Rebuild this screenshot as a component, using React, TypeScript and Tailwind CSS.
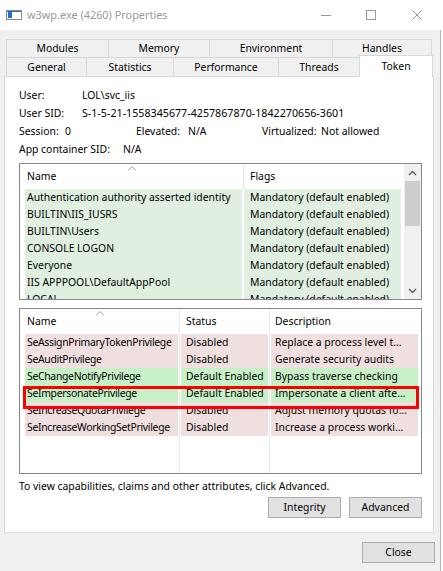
import type { ReactNode } from "react";

type Privilege = {
  name: string;
  status: string;
  desc: string;
  enabled: boolean;
};

const groups = [
  "Authentication authority asserted identity",
  "BUILTIN\\IIS_IUSRS",
  "BUILTIN\\Users",
  "CONSOLE LOGON",
  "Everyone",
  "IIS APPPOOL\\DefaultAppPool",
  "LOCAL",
];

const privileges: Privilege[] = [
  { name: "SeAssignPrimaryTokenPrivilege", status: "Disabled", desc: "Replace a process level t…", enabled: false },
  { name: "SeAuditPrivilege", status: "Disabled", desc: "Generate security audits", enabled: false },
  { name: "SeChangeNotifyPrivilege", status: "Default Enabled", desc: "Bypass traverse checking", enabled: true },
  { name: "SeImpersonatePrivilege", status: "Default Enabled", desc: "Impersonate a client afte…", enabled: true },
  { name: "SeIncreaseQuotaPrivilege", status: "Disabled", desc: "Adjust memory quotas fo…", enabled: false },
  { name: "SeIncreaseWorkingSetPrivilege", status: "Disabled", desc: "Increase a process worki…", enabled: false },
];

const SortCaret = () => (
  <svg width="9" height="5" viewBox="0 0 9 5" className="absolute top-[2px] left-1/2 -translate-x-1/2">
    <polyline points="0.5,4.5 4.5,0.5 8.5,4.5" fill="none" stroke="#9a9a9a" strokeWidth="1" />
  </svg>
);

const Chevron = ({ up }: { up: boolean }) => (
  <svg width="9" height="6" viewBox="0 0 9 6">
    <polyline
      points={up ? "1,5 4.5,1.5 8,5" : "1,1 4.5,4.5 8,1"}
      fill="none"
      stroke="#606060"
      strokeWidth="1.4"
    />
  </svg>
);

const Tab = ({ w, children, last }: { w: string; children: ReactNode; last?: boolean }) => (
  <div
    className={`${w} h-full flex items-center justify-center border-l border-t border-[#d9d9d9] bg-[#f0f0f0] ${
      last ? "border-r" : ""
    }`}
  >
    {children}
  </div>
);

const Button = ({ children, w = "w-[73px]" }: { children: ReactNode; w?: string }) => (
  <div className={`${w} h-[21px] flex items-center justify-center bg-[#e1e1e1] border border-[#adadad]`}>
    {children}
  </div>
);

export default function App() {
  return (
    <div className="w-[443px] h-[571px] bg-white flex font-['Noto_Sans',sans-serif] text-[10.4px] text-black leading-none overflow-hidden">
      <div className="w-[441px] h-full flex flex-col">
        {/* title bar */}
        <div className="h-[30px] bg-white flex items-center">
          <svg width="16" height="10" viewBox="0 0 16 10" className="ml-[6px]">
            <rect x="0.5" y="0.5" width="15" height="9" fill="#fff" stroke="#8a8a8a" />
            <rect x="2" y="2" width="4" height="6" fill="#1f6fd1" />
            <rect x="1" y="1" width="14" height="1" fill="#1f6fd1" />
          </svg>
          <span className="ml-[5px] text-[10.9px] text-[#999999]">w3wp.exe (4260) Properties</span>
          <div className="ml-auto flex items-center">
            <div className="w-[10px] h-px bg-[#9a9a9a] mr-[35px]" />
            <div className="w-[10px] h-[10px] border border-[#9a9a9a] mr-[36px]" />
            <svg width="10" height="10" viewBox="0 0 10 10" className="mr-[19px]">
              <path d="M0.5 0.5 L9.5 9.5 M9.5 0.5 L0.5 9.5" stroke="#9a9a9a" strokeWidth="1" />
            </svg>
          </div>
        </div>

        <div className="flex-1 bg-[#f0f0f0] border-r border-[#b4b4b4] flex flex-col">
          {/* tabs */}
          <div className="pt-[9px] pl-[6px]">
            <div className="flex h-[18px]">
              <Tab w="w-[102px]">Modules</Tab>
              <Tab w="w-[101px]">Memory</Tab>
              <Tab w="w-[123px]">Environment</Tab>
              <Tab w="w-[100px]" last>
                Handles
              </Tab>
            </div>
            <div className="flex h-[19px] items-start">
              <Tab w="w-[80px]">General</Tab>
              <Tab w="w-[87px]">Statistics</Tab>
              <Tab w="w-[105px]">Performance</Tab>
              <Tab w="w-[81px]">Threads</Tab>
              <div className="relative z-10 w-[74px] h-[22px] -mt-[2px] bg-white border-l border-t border-r border-[#d9d9d9] flex justify-center pt-[5px]">
                Token
              </div>
            </div>
          </div>

          {/* token page */}
          <div className="ml-[4px] w-[430px] h-[457px] bg-white border border-[#d9d9d9] flex flex-col">
            <div className="pt-[9px] pl-[14px] flex flex-col">
              <div className="h-[18px] flex items-center">
                <span className="w-[63px]">User:</span>
                <span>LOL\svc_iis</span>
              </div>
              <div className="h-[18px] flex items-center">
                <span className="w-[63px]">User SID:</span>
                <span className="text-[10.7px]">S-1-5-21-1558345677-4257867870-1842270656-3601</span>
              </div>
              <div className="h-[18px] flex items-center">
                <span className="w-[46px]">Session:</span>
                <span className="w-[71px]">0</span>
                <span className="w-[52px]">Elevated:</span>
                <span className="w-[74px]">N/A</span>
                <span className="w-[59px]">Virtualized:</span>
                <span>Not allowed</span>
              </div>
              <div className="h-[18px] flex items-center">
                <span className="w-[104px]">App container SID:</span>
                <span>N/A</span>
              </div>

              {/* groups */}
              <div className="mt-[5px] w-[403px] h-[137px] border border-[#828790] bg-white flex overflow-hidden">
                <div className="w-[384px] flex flex-col">
                  <div className="h-[25px] shrink-0 flex">
                    <div className="relative w-[223px] flex items-center pl-[7px]">
                      <SortCaret />
                      Name
                    </div>
                    <div className="w-px bg-[#e5e5e5]" />
                    <div className="flex items-center pl-[6px]">Flags</div>
                  </div>
                  {groups.map((g) => (
                    <div key={g} className="h-[17px] shrink-0 flex pl-[5px]">
                      <div className="w-[217px] bg-[#e0efe0] flex items-center pl-[2px] whitespace-nowrap overflow-hidden">
                        {g}
                      </div>
                      <div className="w-[157px] ml-[2px] bg-[#e0efe0] flex items-center pl-[6px] whitespace-nowrap overflow-hidden">
                        Mandatory (default enabled)
                      </div>
                    </div>
                  ))}
                </div>
                <div className="w-[17px] ml-auto bg-[#f0f0f0] flex flex-col">
                  <div className="h-[17px] flex items-center justify-center">
                    <Chevron up />
                  </div>
                  <div className="h-[45px] mx-px bg-[#cdcdcd]" />
                  <div className="flex-1" />
                  <div className="h-[17px] flex items-center justify-center">
                    <Chevron up={false} />
                  </div>
                </div>
              </div>

              {/* privileges */}
              <div className="relative mt-[8px] w-[403px] h-[166px] border border-[#828790] bg-white flex">
                <div className="w-[160px] border-r border-[#e5e8ec] flex flex-col">
                  <div className="relative h-[25px] flex items-center pl-[7px]">
                    <SortCaret />
                    Name
                  </div>
                  {privileges.map((p) => (
                    <div
                      key={p.name}
                      className={`h-[17px] ml-[5px] w-[153px] flex items-center pl-[2px] tracking-[-0.3px] whitespace-nowrap overflow-hidden ${
                        p.enabled ? "bg-[#c7f0c7]" : "bg-[#f0dfdf]"
                      }`}
                    >
                      {p.name}
                    </div>
                  ))}
                </div>
                <div className="w-[90px] border-r border-[#e5e8ec] flex flex-col">
                  <div className="h-[25px] flex items-center pl-[6px]">Status</div>
                  {privileges.map((p) => (
                    <div
                      key={p.name}
                      className={`h-[17px] ml-px w-[87px] flex items-center pl-[5px] whitespace-nowrap overflow-hidden ${
                        p.enabled ? "bg-[#c7f0c7]" : "bg-[#f0dfdf]"
                      }`}
                    >
                      {p.status}
                    </div>
                  ))}
                </div>
                <div className="flex-1 flex flex-col">
                  <div className="h-[25px] flex items-center pl-[5px]">Description</div>
                  {privileges.map((p) => (
                    <div
                      key={p.name}
                      className={`h-[17px] ml-px w-[147px] flex items-center pl-[4px] whitespace-nowrap overflow-hidden ${
                        p.enabled ? "bg-[#c7f0c7]" : "bg-[#f0dfdf]"
                      }`}
                    >
                      {p.desc}
                    </div>
                  ))}
                </div>
                {/* marked row */}
                <div className="absolute left-[3px] top-[77px] w-[396px] h-[23px] border-[3px] border-[#ff0000] pointer-events-none" />
              </div>

              <div className="mt-[3px] h-[18px] flex items-center">
                To view capabilities, claims and other attributes, click Advanced.
              </div>
              <div className="mt-[2px] w-[403px] flex justify-end gap-[8px]">
                <Button>Integrity</Button>
                <Button>Advanced</Button>
              </div>
            </div>
          </div>

          <div className="mt-[9px] flex justify-end pr-[5px]">
            <Button>Close</Button>
          </div>
        </div>
      </div>
    </div>
  );
}
